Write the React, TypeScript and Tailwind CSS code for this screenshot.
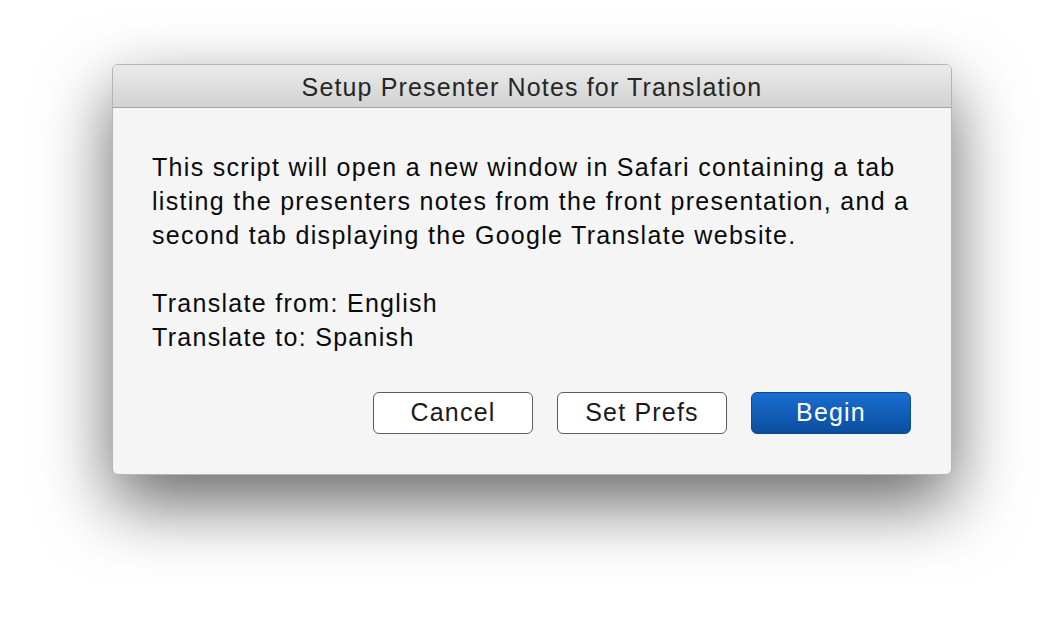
export default function App() {
  return (
    <div
      className="min-h-[634px] w-[1064px] bg-white pt-[64px] pl-[112px]"
      style={{ fontFamily: '"Liberation Sans", Arial, sans-serif' }}
    >
      <div className="w-[840px] overflow-hidden rounded-[6px] border border-[#b5b5b5] bg-[#f5f5f5] shadow-[0_28px_70px_rgba(0,0,0,0.6)]">
        {/* Title bar */}
        <div className="flex h-[43px] items-center justify-center border-b border-[#a3a3a3] bg-gradient-to-b from-[#ebebeb] to-[#d2d2d2] pt-[3px] text-[25px] tracking-[1.15px] text-[#262626]">
          Setup Presenter Notes for Translation
        </div>

        {/* Body */}
        <div className="px-[39px] pt-[42px] pb-[40px]">
          <div className="text-[25px] leading-[34px] tracking-[1.3px] text-[#0a0a0a]">
            <p className="whitespace-nowrap">This script will open a new window in Safari containing a tab</p>
            <p className="whitespace-nowrap">listing the presenters notes from the front presentation, and a</p>
            <p className="whitespace-nowrap">second tab displaying the Google Translate website.</p>
            <p className="h-[34px]" />
            <p>Translate from: English</p>
            <p>Translate to: Spanish</p>
          </div>

          <div className="mt-[38px] flex justify-end gap-[24px] pr-[1px]">
            <button className="h-[42px] w-[160px] rounded-[6px] border-[1.5px] border-[#5c5c5c] bg-white text-[25px] tracking-[1.2px] text-[#1a1a1a]">
              Cancel
            </button>
            <button className="h-[42px] w-[170px] rounded-[6px] border-[1.5px] border-[#5c5c5c] bg-white text-[25px] tracking-[1.2px] text-[#1a1a1a]">
              Set Prefs
            </button>
            <button className="h-[42px] w-[160px] rounded-[6px] border border-[#0a4a96] bg-gradient-to-b from-[#1a6dd0] to-[#0a4f9f] text-[25px] tracking-[1.2px] text-white">
              Begin
            </button>
          </div>
        </div>
      </div>
    </div>
  );
}
